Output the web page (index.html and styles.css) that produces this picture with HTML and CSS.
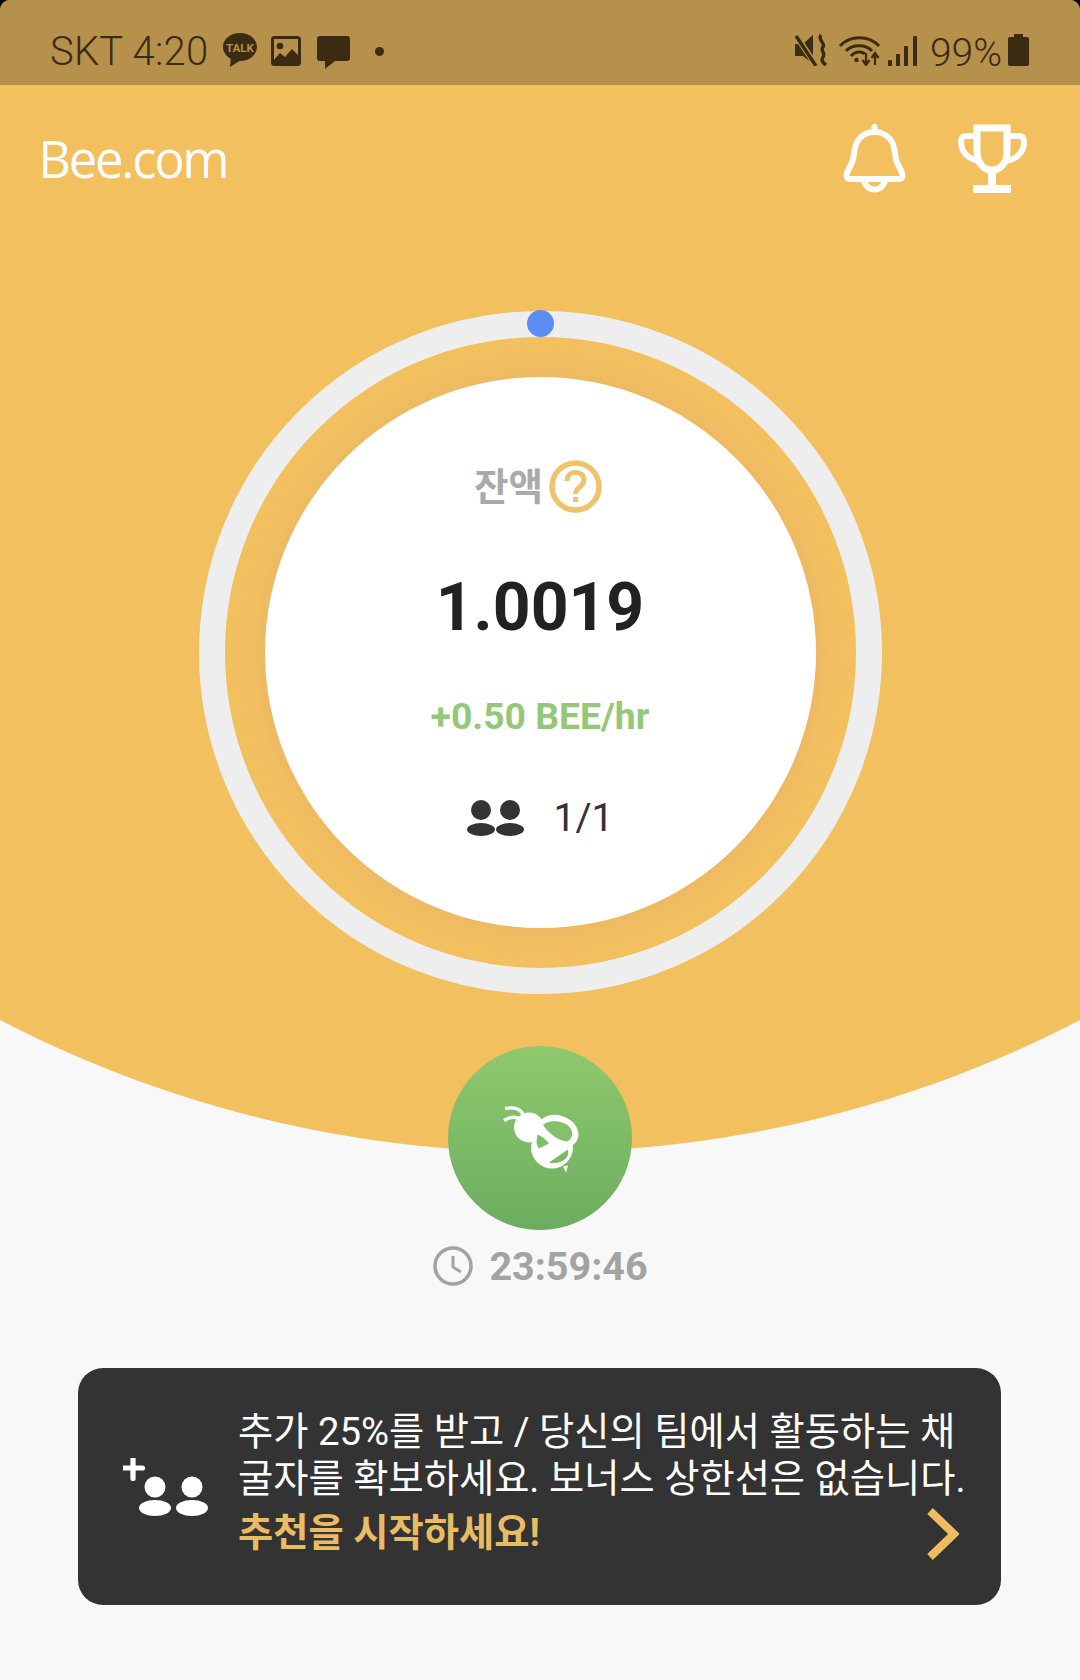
FILE: index.html
```html
<!DOCTYPE html>
<html lang="ko">
<head>
	<title>Bee.com</title>
	<meta charset="utf-8">
	<link rel="stylesheet" href="styles.css">
</head>
<body>
<div class="app">

	<div class="status">
		<div class="status-left">
			<span class="status-text status-clock">SKT 4:20</span>
			<svg class="ic-talk" viewBox="0 0 34 34">
				<ellipse cx="17" cy="14" rx="17" ry="14" fill="#3b2b13"/>
				<path d="M8 24 L7 34 L18 27Z" fill="#3b2b13"/>
				<text class="talk-text" x="17" y="18.5" text-anchor="middle">TALK</text>
			</svg>
			<svg class="ic-image" viewBox="0 0 30 30">
				<rect x="1.5" y="1.5" width="27" height="27" rx="2" fill="none" stroke="#3b2b13" stroke-width="3"/>
				<circle cx="9" cy="10" r="3.3" fill="#3b2b13"/>
				<path d="M2 25 L9 17 L14 21 L21 13 L28 20 V28 H2Z" fill="#3b2b13"/>
			</svg>
			<svg class="ic-chat" viewBox="0 0 33 33">
				<path d="M3 0 H30 Q33 0 33 3 V22 Q33 25 30 25 H18 L8 33 V25 H3 Q0 25 0 22 V3 Q0 0 3 0Z" fill="#3b2b13"/>
			</svg>
			<span class="status-dot"></span>
		</div>
		<div class="status-right">
			<svg class="ic-mute" viewBox="0 0 33 32">
				<path d="M1 10 H8 L18 1 V30 L8 22 H1 Q0 22 0 21 V11 Q0 10 1 10Z" fill="#3b2b13"/>
				<path d="M0 0 L22 33" stroke="#b5914b" stroke-width="6" fill="none"/>
				<path d="M1 2 L21 32" stroke="#3b2b13" stroke-width="3.4" fill="none"/>
				<path d="M26 1 C22 6 31 9 28 13 C25 17 31 19 28 23 C26 26 28 29 31 31" stroke="#3b2b13" stroke-width="3.4" fill="none"/>
			</svg>
			<svg class="ic-wifi" viewBox="0 0 41 31">
				<path d="M1 11 C11 0 30 0 40 11" stroke="#3b2b13" stroke-width="3" fill="none"/>
				<path d="M7 16 C13 9 27 9 33 16" stroke="#3b2b13" stroke-width="3" fill="none"/>
				<path d="M12 21 C16 16 23 16 26 19" stroke="#3b2b13" stroke-width="3" fill="none"/>
				<circle cx="17.5" cy="25" r="2.2" fill="#3b2b13"/>
				<path d="M27 18 V29 M23.5 25 L27 30 L30.5 25" stroke="#3b2b13" stroke-width="2.2" fill="none"/>
				<path d="M36 30 V20 M32.5 23 L36 18 L39.5 23" stroke="#3b2b13" stroke-width="2.2" fill="none"/>
			</svg>
			<svg class="ic-signal" viewBox="0 0 29 30">
				<rect x="0" y="24" width="4" height="6" rx="1" fill="#3b2b13"/>
				<rect x="8" y="18" width="4" height="12" rx="1" fill="#3b2b13"/>
				<rect x="16" y="10" width="4" height="20" rx="1" fill="#3b2b13"/>
				<rect x="25" y="0" width="4" height="30" rx="1" fill="#3b2b13"/>
			</svg>
			<span class="status-text status-pct">99%</span>
			<svg class="ic-battery" viewBox="0 0 21 32">
				<path d="M6 0 H15 V3 H19 Q21 3 21 5 V30 Q21 32 19 32 H2 Q0 32 0 30 V5 Q0 3 2 3 H6Z" fill="#3b2b13"/>
			</svg>
		</div>
	</div>

	<div class="topbar">
		<div class="logo">Bee.com</div>
		<div class="top-icons">
			<svg class="ic-bell" viewBox="0 0 63 69">
				<path d="M31.5 8 C18 8 12 18 11 30 C10 42 3 46 3.5 52 C4 55 6 55 8 55 H55 C57 55 59 55 59.5 52 C60 46 53 42 52 30 C51 18 45 8 31.5 8Z" fill="none" stroke="#fff" stroke-width="6"/>
				<path d="M31.5 3 V8" stroke="#fff" stroke-width="6" stroke-linecap="round"/>
				<path d="M21 55 A10.5 10.5 0 0 0 42 55" fill="none" stroke="#fff" stroke-width="6"/>
			</svg>
			<svg class="ic-trophy" viewBox="0 0 69 69">
				<path d="M19 4 H49 V28 C49 38 43 46 34 46 C25 46 19 38 19 28Z" fill="none" stroke="#fff" stroke-width="7"/>
				<path d="M19 12 H8 Q3 12 3 18 C3 28 10 35 21 37 M49 12 H61 Q66 12 66 18 C66 28 59 35 48 37" fill="none" stroke="#fff" stroke-width="6"/>
				<rect x="30" y="46" width="8" height="16" fill="#fff"/>
				<rect x="15" y="61" width="38" height="8" fill="#fff"/>
			</svg>
		</div>
	</div>

	<div class="ring">
		<span class="ring-dot"></span>
		<div class="balance">
			<div class="balance-label">
				<span>잔액</span>
				<svg class="ic-help" viewBox="0 0 53 53">
					<circle cx="26.5" cy="26.5" r="23.5" fill="none" stroke="#efc36d" stroke-width="5.5"/>
					<path d="M18 21 C18 9 35 10 35 20 C35 27 26.5 27 26.5 34" fill="none" stroke="#efc36d" stroke-width="5"/>
					<rect x="24" y="37" width="5" height="5" fill="#efc36d"/>
				</svg>
			</div>
			<div class="balance-amount">1.0019</div>
			<div class="balance-rate">+0.50 BEE/hr</div>
			<div class="balance-team">
				<svg class="ic-team" viewBox="0 0 57 36">
					<circle cx="14" cy="10" r="10" fill="#333"/>
					<circle cx="43" cy="10" r="10" fill="#333"/>
					<ellipse cx="14" cy="29.5" rx="14" ry="6.5" fill="#333"/>
					<ellipse cx="43" cy="29.5" rx="14" ry="6.5" fill="#333"/>
				</svg>
				<span>1/1</span>
			</div>
		</div>
	</div>

	<div class="mine-btn">
		<svg class="ic-bee" viewBox="0 -2.5 90 90">
			<path d="M10 13 Q20 11 25 15 L31 22 M9 25 Q15 21 21 22 L29 26" fill="none" stroke="#fff" stroke-width="3.4"/>
			<circle cx="34" cy="32" r="15" fill="#fff"/>
			<ellipse cx="63" cy="36" rx="21" ry="16" transform="rotate(20 63 36)" fill="#fff"/>
			<circle cx="57" cy="52" r="21" fill="#fff"/>
			<path d="M68 71 L71 77 L73 70Z" fill="#fff"/>
			<path d="M48 29 C52 26 58 25 63 26 C70 27 76 31 77 36 C78 41 75 45 72 46 C66 45 61 43 58 40 C54 37 50 33 48 29Z" fill="#84c16a"/>
			<path d="M43 39 C47 41 51 44 54 48 L44 53 C41 49 41 44 43 39Z" fill="#80bd67"/>
			<path d="M54 67 L73 54 C74 59 72 63 68 65 C63 68 58 68 54 67Z" fill="#7cb965"/>
		</svg>
	</div>

	<div class="timer">
		<svg class="ic-clock" viewBox="0 0 40 40">
			<circle cx="20" cy="20" r="18" fill="none" stroke="#a3a3a3" stroke-width="3.5"/>
			<path d="M20 10 V21 L28 26" fill="none" stroke="#a3a3a3" stroke-width="3"/>
		</svg>
		<span>23:59:46</span>
	</div>

	<div class="invite">
		<svg class="ic-invite" viewBox="0 0 86 58">
			<path d="M10 0 V21 M0 10 H20" stroke="#fff" stroke-width="5.5" stroke-linecap="round" transform="translate(0.5 0.5) scale(0.95)"/>
			<circle cx="32" cy="29" r="10.5" fill="#fff"/>
			<circle cx="69" cy="29" r="10.5" fill="#fff"/>
			<ellipse cx="32" cy="50" rx="16" ry="8" fill="#fff"/>
			<ellipse cx="69" cy="50" rx="16" ry="8" fill="#fff"/>
		</svg>
		<div class="invite-body">
			<p class="invite-text">추가 25%를 받고 / 당신의 팀에서 활동하는 채<br>굴자를 확보하세요. 보너스 상한선은 없습니다.</p>
			<div class="invite-cta">
				<span>추천을 시작하세요!</span>
				<svg class="ic-chevron" viewBox="0 0 32 52">
					<path d="M3 3 L27 26 L3 49" fill="none" stroke="#efbd5f" stroke-width="8"/>
				</svg>
			</div>
		</div>
	</div>

</div>
</body>
</html>
```

FILE: styles.css
```css
* { box-sizing: border-box; }

html, body { margin: 0; padding: 0; background: #000; }

body { font-family: Roboto, "Noto Sans CJK KR", sans-serif; }

svg { display: block; flex: none; }

.app {
	width: 1080px; height: 1680px; overflow: hidden;
	border-radius: 10px 10px 0 0;
	background: radial-gradient(circle at 540px -18px, #f3c060 1169.5px, #f8f8f8 1170.5px);
}

/* status bar */
.status {
	height: 85px; background: #b5914b; color: #3b2b13;
	display: flex; justify-content: space-between;
}
.status-left { display: flex; padding: 33px 0 0 50px; }
.status-right { display: flex; padding: 34px 51px 0 0; }
.status-text { font-size: 39px; font-weight: 300; line-height: 38px; }
.status-clock { font-size: 40px; letter-spacing: 0.2px; }
.status-pct { margin-left: 13px; }

.ic-talk { width: 34px; height: 34px; margin-left: 15px; }
.talk-text { font: bold 11.5px Roboto, sans-serif; fill: #b5914b; }
.ic-image { width: 30px; height: 30px; margin: 3px 0 0 14px; }
.ic-chat { width: 33px; height: 33px; margin: 3px 0 0 16px; }
.status-dot { width: 9px; height: 9px; border-radius: 50%; background: #3b2b13; margin: 14px 0 0 25px; }

.ic-mute { width: 33px; height: 32px; }
.ic-wifi { width: 41px; height: 31px; margin: 1px 0 0 11px; }
.ic-signal { width: 29px; height: 30px; margin: 2px 0 0 8px; }
.ic-battery { width: 21px; height: 32px; margin-left: 6px; }

/* top bar */
.topbar {
	display: flex; justify-content: space-between;
	padding: 39px 53px 0 38px;
}
.logo {
	font-family: "Open Sans", sans-serif; font-weight: 400;
	font-size: 51px; line-height: 69px; color: #fff; letter-spacing: -2.4px;
}
.top-icons { display: flex; gap: 52px; }
.ic-bell { width: 63px; height: 69px; }
.ic-trophy { width: 69px; height: 69px; }

/* balance ring */
.ring {
	position: relative;
	width: 683px; height: 683px; margin: 118px auto 0;
	border: 26px solid #eeeeee; border-radius: 50%;
	display: flex; align-items: center; justify-content: center;
}
.ring-dot {
	position: absolute; top: -27px; left: 50%;
	width: 27px; height: 27px; margin-left: -13.5px;
	border-radius: 50%; background: #5b8df5;
}
.balance {
	width: 551px; height: 551px; border-radius: 50%; background: #fff;
	box-shadow: 0 0 30px rgba(215, 165, 110, 0.45);
	display: flex; flex-direction: column; align-items: center;
	padding-top: 83px;
}
.balance-label {
	display: flex; align-items: center; gap: 6px;
	font-size: 37.5px; font-weight: 700; color: #aaa; height: 53px;
}
.balance-label span { line-height: 53px; padding-top: 2px; }
.ic-help { width: 53px; height: 53px; margin-right: 4px; }
.balance-amount {
	margin-top: 62px;
	font-size: 66px; font-weight: 700; line-height: 66px; color: #222;
}
.balance-rate {
	margin-top: 55px;
	font-size: 37.3px; font-weight: 700; line-height: 40px; color: #93c878;
}
.balance-team {
	margin-top: 64px;
	display: flex; align-items: center; gap: 30px;
	font-size: 39px; font-weight: 400; line-height: 36px; color: #333;
}
.ic-team { width: 57px; height: 36px; }

/* mining button */
.mine-btn {
	width: 184px; height: 184px; margin: 52px auto 0; border-radius: 50%;
	background: linear-gradient(#90c96e, #6bad5f);
	display: flex; align-items: center; justify-content: center;
}
.ic-bee { width: 90px; height: 90px; }

.timer {
	margin-top: 16px; height: 40px; padding-left: 1px;
	display: flex; align-items: center; justify-content: center; gap: 16px;
	font-size: 39.5px; font-weight: 700; color: #a3a3a3;
}
.ic-clock { width: 40px; height: 40px; }

/* invite card */
.invite {
	width: 923px; height: 237px; margin: 82px 0 0 78px;
	border-radius: 25px; background: #333;
	display: flex; padding: 40px 42px 0 45px;
}
.ic-invite { width: 86px; height: 58px; margin: 50px 29px 0 0; }
.invite-body { flex: 1; min-width: 0; white-space: nowrap; }
.invite-text { margin: 0; font-size: 38.3px; line-height: 47px; color: #fff; }
.invite-cta {
	margin-top: 1px;
	display: flex; align-items: center; justify-content: space-between;
	font-size: 38.3px; font-weight: 700; color: #e9bb62; height: 52px;
}
.ic-chevron { width: 32px; height: 52px; margin-top: 10px; }
```
